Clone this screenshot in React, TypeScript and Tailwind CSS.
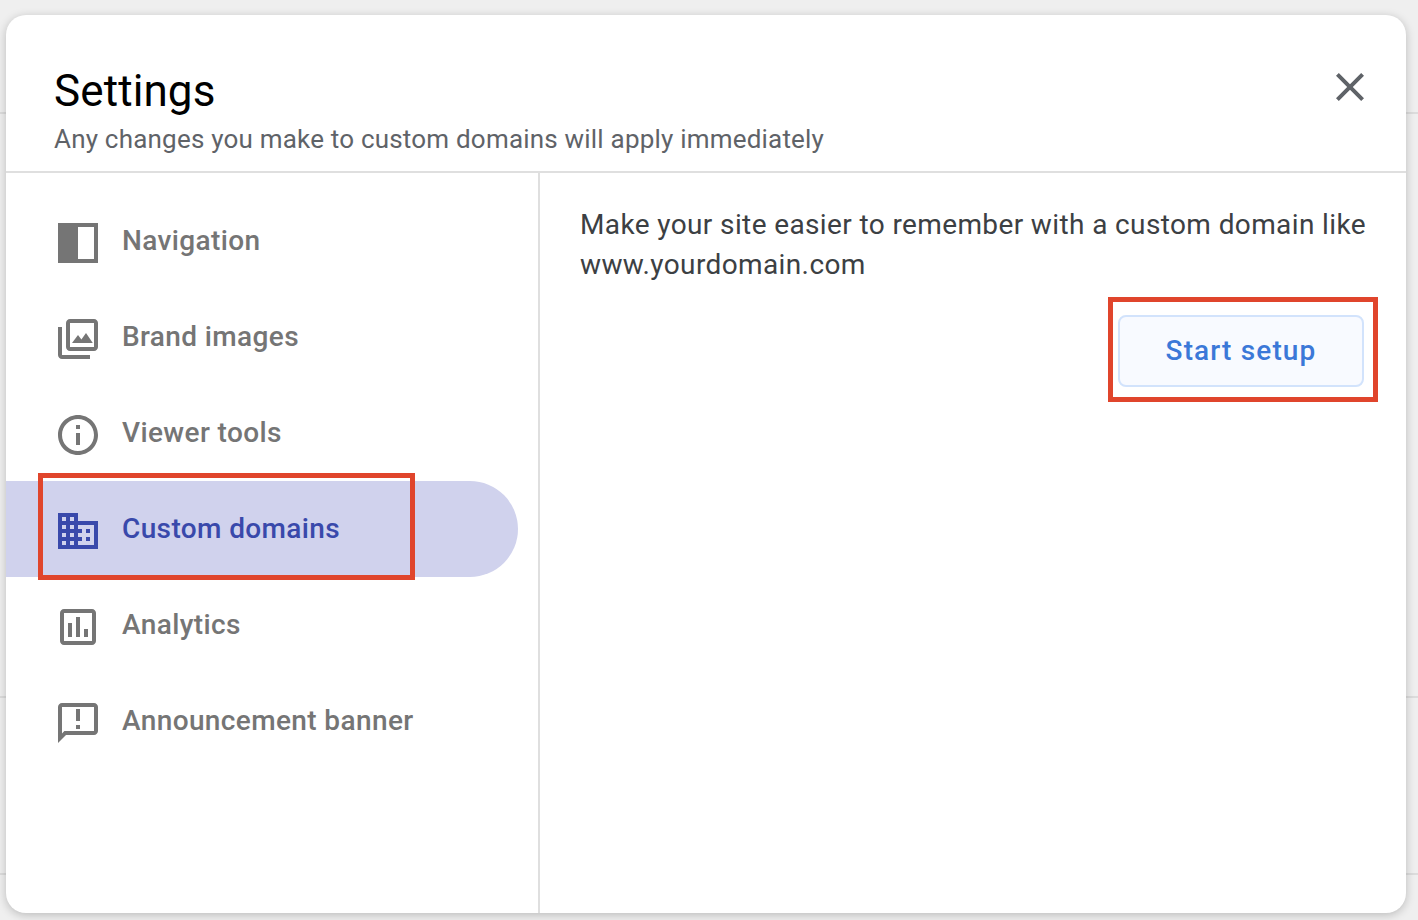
import React from "react";

function NavIcon({ d }: { d: string }) {
  return (
    <svg width="48" height="48" viewBox="0 0 24 24" fill="currentColor" className="shrink-0 mt-[4px]">
      <path d={d} />
    </svg>
  );
}

const items = [
  { label: "Navigation", d: "M2 2h20v20H2V2zm10 2v16h8V4h-8z" },
  {
    label: "Brand images",
    d: "M22 16V4c0-1.1-.9-2-2-2H8c-1.1 0-2 .9-2 2v12c0 1.1.9 2 2 2h12c1.1 0 2-.9 2-2zM8 16V4h12v12H8zm1-2 3-4 1.7 2.2L16 9l3.4 5H9zM2 6v14c0 1.1.9 2 2 2h14v-2H4V6H2z",
  },
  {
    label: "Viewer tools",
    d: "M11 7h2v2h-2V7zm0 4h2v6h-2v-6zm1-9C6.48 2 2 6.48 2 12s4.48 10 10 10 10-4.48 10-10S17.52 2 12 2zm0 18c-4.41 0-8-3.59-8-8s3.59-8 8-8 8 3.59 8 8-3.59 8-8 8z",
  },
  {
    label: "Custom domains",
    active: true,
    d: "M12 7V3H2v18h20V7H12zM6 19H4v-2h2v2zm0-4H4v-2h2v2zm0-4H4V9h2v2zm0-4H4V5h2v2zm4 12H8v-2h2v2zm0-4H8v-2h2v2zm0-4H8V9h2v2zm0-4H8V5h2v2zm10 12h-8v-2h2v-2h-2v-2h2v-2h-2V9h8v10zm-2-8h-2v2h2v-2zm0 4h-2v2h2v-2z",
  },
  {
    label: "Analytics",
    d: "M19 3H5c-1.1 0-2 .9-2 2v14c0 1.1.9 2 2 2h14c1.1 0 2-.9 2-2V5c0-1.1-.9-2-2-2zm0 16H5V5h14v14zM7 10h2v7H7v-7zm4-3h2v10h-2V7zm4 6h2v4h-2v-4z",
  },
  {
    label: "Announcement banner",
    d: "M20 2H4c-1.1 0-2 .9-2 2v18l4-4h14c1.1 0 2-.9 2-2V4c0-1.1-.9-2-2-2zm0 14H5.2L4 17.2V4h16v12zM11 5h2v6h-2V5zm0 8h2v2h-2v-2z",
  },
];

export default function App() {
  return (
    <div className="relative w-[1418px] h-[920px] overflow-hidden bg-[#efefef] font-['Roboto',sans-serif]">
      <div className="absolute left-0 right-0 top-[112px] h-[2px] bg-[#dcdcdc]" />
      <div className="absolute left-0 right-0 top-[696px] h-[2px] bg-[#dcdcdc]" />
      <div className="absolute left-0 right-0 top-[873px] h-[2px] bg-[#dcdcdc]" />

      <div className="absolute left-[6px] top-[15px] w-[1400px] h-[898px] flex flex-col bg-white rounded-[20px] shadow-[0_2px_10px_rgba(0,0,0,0.22)] overflow-hidden">
        <header className="relative h-[158px] shrink-0 border-b-2 border-[#dfdfdf] pl-[48px] pt-[48px]">
          <h1 className="text-[44px] leading-[56px] font-normal text-black tracking-[0.1px]">Settings</h1>
          <p className="text-[26px] leading-[32px] mt-[4px] text-[#5f6368] tracking-[0.2px]">
            Any changes you make to custom domains will apply immediately
          </p>
          <svg width="48" height="48" viewBox="0 0 24 24" className="absolute left-[1320px] top-[48px]" fill="#5f6368">
            <path d="M19 6.41 17.59 5 12 10.59 6.41 5 5 6.41 10.59 12 5 17.59 6.41 19 12 13.41 17.59 19 19 17.59 13.41 12z" />
          </svg>
        </header>

        <div className="flex flex-1 min-h-0">
          <nav className="w-[534px] shrink-0 border-r-2 border-[#dfdfdf] pt-[20px] pr-[20px]">
            {items.map((it) => (
              <div
                key={it.label}
                className={
                  it.active
                    ? "h-[96px] flex items-center pl-[48px] gap-[20px] rounded-r-[48px] bg-[#d0d2ed] text-[#3949ab]"
                    : "h-[96px] flex items-center pl-[48px] gap-[20px] text-[#757575]"
                }
              >
                <NavIcon d={it.d} />
                <span className="text-[28px] leading-[36px] font-medium tracking-[0.38px]">{it.label}</span>
              </div>
            ))}
          </nav>

          <main className="flex-1 pl-[40px] pr-[36px] pt-[32px]">
            <p className="text-[28px] leading-[40px] text-[#3c4043] tracking-[0.38px]">
              Make your site easier to remember with a custom domain like www.yourdomain.com
            </p>
            <div className="flex justify-end mt-[30px] pr-[6px]">
              <button className="w-[246px] h-[72px] rounded-[8px] border-2 border-[#d2e3fc] bg-[#f8faff] text-[#3b78d8] text-[28px] font-medium tracking-[1.15px]">
                Start setup
              </button>
            </div>
          </main>
        </div>
      </div>

      <div className="absolute left-[38px] top-[473px] w-[377px] h-[107px] border-[5px] border-[#e0452c]" />
      <div className="absolute left-[1108px] top-[297px] w-[270px] h-[105px] border-[5px] border-[#e0452c]" />
    </div>
  );
}
